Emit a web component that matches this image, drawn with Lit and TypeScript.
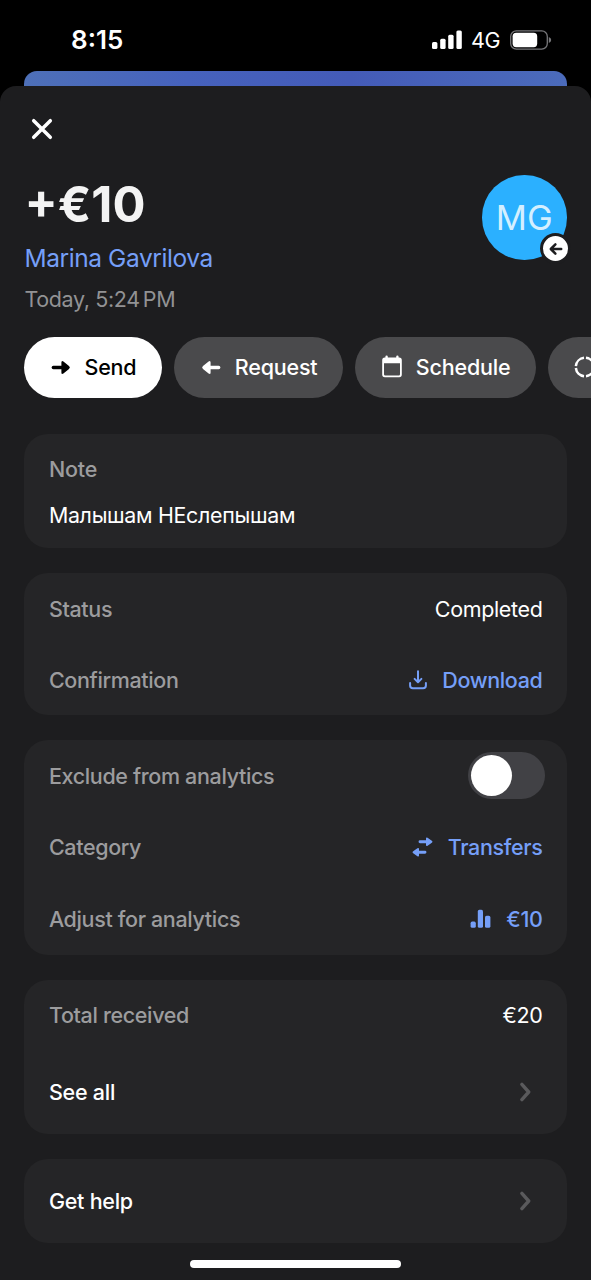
import { LitElement, html, css, svg, type TemplateResult } from "lit";
import { customElement, property } from "lit/decorators.js";

const sendArrow = svg`<path d="M2.3 9.5H11.5" stroke="currentColor" stroke-width="3.3" stroke-linecap="round"/><path d="M10.4 4.6Q10.4 2.2 12.4 3.5L18 8.1Q19.8 9.5 18 10.9L12.4 15.5Q10.4 16.8 10.4 14.4Z" fill="currentColor"/>`;

const icons: Record<string, TemplateResult> = {
  close: html`<svg width="22" height="22" viewBox="0 0 22 22"><path d="M2.7 2.7L19.3 19.3M19.3 2.7L2.7 19.3" stroke="#fff" stroke-width="3.5" stroke-linecap="round"/></svg>`,
  send: html`<svg width="20" height="19" viewBox="0 0 20 19">${sendArrow}</svg>`,
  request: html`<svg width="20" height="19" viewBox="0 0 20 19"><g transform="translate(20 0) scale(-1 1)">${sendArrow}</g></svg>`,
  calendar: html`<svg width="22" height="24" viewBox="0 0 22 24"><path fill="currentColor" fill-rule="evenodd" d="M4.4 1.7Q4.4 .5 5.6 .5T6.8 1.7V2.6H15.2V1.7Q15.2 .5 16.4 .5T17.6 1.7V2.6H18.2Q20.8 2.6 20.8 5.2V19.6Q20.8 22.2 18.2 22.2H3.8Q1.2 22.2 1.2 19.6V5.2Q1.2 2.6 3.8 2.6H4.4ZM3 8.3V19.2Q3 20.4 4.2 20.4H17.8Q19 20.4 19 19.2V8.3Z"/></svg>`,
  split: html`<svg width="22" height="22" viewBox="0 0 22 22"><circle cx="11" cy="11" r="9.2" fill="none" stroke="currentColor" stroke-width="2.5" pathLength="100" stroke-dasharray="21.5 3.5" transform="rotate(-84 11 11)"/></svg>`,
  download: html`<svg width="18" height="20" viewBox="0 0 18 20"><path d="M1.1 13V15.4Q1.1 18.2 3.9 18.2H14.1Q16.9 18.2 16.9 15.4V13M9 1.2V11.8M5.6 8.9L9 12.2L12.4 8.9" fill="none" stroke="currentColor" stroke-width="2" stroke-linecap="round" stroke-linejoin="round"/></svg>`,
  transfers: html`<svg width="21" height="20" viewBox="0 0 21 20"><path d="M8 4.7H15.5M5.5 15.3H13" stroke="currentColor" stroke-width="2.9" stroke-linecap="round"/><path d="M14 1.5Q14 -.2 15.6 .7L19.8 3.7Q21.1 4.7 19.8 5.7L15.6 8.7Q14 9.6 14 7.9ZM7 12.1Q7 10.4 5.4 11.3L1.2 14.3Q-.1 15.3 1.2 16.3L5.4 19.3Q7 20.2 7 18.5Z" fill="currentColor"/></svg>`,
  bars: html`<svg width="21" height="20" viewBox="0 0 21 20"><g fill="currentColor"><rect x=".6" y="12.6" width="5.2" height="6.2" rx="1.6"/><rect x="7.8" y=".8" width="5.2" height="18" rx="1.6"/><rect x="15" y="6.8" width="5.4" height="12" rx="1.6"/></g></svg>`,
  chevron: html`<svg width="11" height="20" viewBox="0 0 11 20"><path d="M1.9 2.4L8.7 10L1.9 17.6" fill="none" stroke="#5a5a5c" stroke-width="3.4" stroke-linecap="round" stroke-linejoin="round"/></svg>`,
  back: html`<svg width="14" height="14" viewBox="0 0 14 14"><path d="M12.2 7H2.4M6.4 2.4L1.8 7L6.4 11.6" fill="none" stroke="#1d1d1f" stroke-width="2.5" stroke-linecap="round" stroke-linejoin="round"/></svg>`,
};

@customElement("status-bar")
class StatusBar extends LitElement {
  static styles = css`
    :host { display: flex; height: 71px; box-sizing: border-box; padding: 8px 39px 0 71px; align-items: center; color: #fff; }
    .time { flex: 1; font-size: 26px; font-weight: 600; letter-spacing: 0; }
    .network { font-size: 21.5px; letter-spacing: -0.5px; margin: 1px 10px 0 9px; }
    svg { display: block; }
  `;
  render() {
    return html`
      <span class="time">8:15</span>
      <svg width="30" height="20" viewBox="0 0 30 20" fill="#fff"><rect x="0" y="12" width="5.4" height="7" rx="1.5"/><rect x="8.2" y="8.7" width="5.4" height="10.3" rx="1.5"/><rect x="16.2" y="4.8" width="5.4" height="14.2" rx="1.5"/><rect x="24.4" y="0.6" width="5.4" height="18.4" rx="1.5"/></svg>
      <span class="network">4G</span>
      <svg width="42" height="20" viewBox="0 0 42 20"><rect x=".7" y=".8" width="36.6" height="18.4" rx="5.6" fill="none" stroke="#77777a" stroke-width="1.3"/><rect x="2.6" y="2.8" width="24.6" height="14.4" rx="3.6" fill="#fff"/><path d="M38.8 7Q41.2 8 41.2 10T38.8 13Z" fill="#77777a"/></svg>
    `;
  }
}

@customElement("action-pill")
class ActionPill extends LitElement {
  @property() icon = "";
  @property() label = "";
  @property({ type: Boolean, reflect: true }) primary = false;
  static styles = css`
    :host { display: flex; flex: none; box-sizing: border-box; height: 60.5px; border-radius: 31px; padding: 0 25.5px 0 26px; align-items: center; gap: 13.5px; background: #4a4a4c; color: #fff; font-size: 21.5px; font-weight: 500; letter-spacing: -0.2px; white-space: nowrap; }
    :host([primary]) { background: #fff; color: #000; }
    .glyph { display: flex; width: 21px; justify-content: center; }
    svg { display: block; flex: none; }
  `;
  render() {
    return html`<span class="glyph">${icons[this.icon]}</span><span>${this.label}</span>`;
  }
}

@customElement("detail-row")
class DetailRow extends LitElement {
  @property() label = "";
  @property() value = "";
  @property() icon = "";
  @property({ type: Boolean, reflect: true }) link = false;
  @property({ type: Boolean, reflect: true }) nav = false;
  @property({ type: Boolean }) toggle = false;
  static styles = css`
    :host { display: flex; align-items: center; justify-content: space-between; height: 71px; padding: 0 24px 0 24.5px; color: #9c9c9e; font-size: 21.5px; font-weight: 450; letter-spacing: -0.35px; white-space: nowrap; }
    :host([nav]) { color: #fff; padding-right: 35.5px; font-weight: 500; letter-spacing: -0.25px; }
    .value { display: flex; align-items: center; gap: 15px; color: #fff; font-weight: 400; }
    :host([link]) .value { color: #759ff8; font-weight: 500; }
    .switch { display: flex; box-sizing: border-box; width: 77px; height: 47px; padding: 3px; margin-right: -2px; border-radius: 24px; background: #414145; }
    .knob { width: 41px; height: 41px; border-radius: 50%; background: #fff; }
    svg { display: block; }
  `;
  render() {
    return html`
      <span>${this.label}</span>
      ${this.toggle ? html`<span class="switch"><span class="knob"></span></span>` : ""}
      ${this.nav ? icons.chevron : ""}
      ${this.value ? html`<span class="value">${this.icon ? icons[this.icon] : ""}<span>${this.value}</span></span>` : ""}
    `;
  }
}

@customElement("app-root")
class AppRoot extends LitElement {
  static styles = css`
    :host { display: flex; flex-direction: column; height: 1280px; overflow: hidden; background: #000; font-family: Inter, sans-serif; font-weight: 400; }
    .behind { height: 15px; margin: 0 24.4px; border-radius: 13px 13px 0 0; background: linear-gradient(90deg, #4e70b8, #4662bd 30%, #445bb8 60%, #4b6bbb); }
    .sheet { flex: 1; display: flex; flex-direction: column; box-sizing: border-box; border-radius: 16px 16px 0 0; background: #1d1d1f; overflow: hidden; }
    .close { display: flex; height: 22px; padding: 32px 0 0 31px; }
    .header { display: flex; justify-content: space-between; height: 197px; box-sizing: border-box; padding: 35px 24.5px 0 24.5px; white-space: nowrap; }
    .amount { font-size: 49px; line-height: 60px; font-weight: 700; color: #f3f3f3; letter-spacing: 0; font-feature-settings: "case"; }
    .name { font-size: 24.5px; line-height: 30px; color: #759ff8; margin-top: 8px; letter-spacing: -0.42px; }
    .date { font-size: 21.5px; line-height: 28px; color: #929294; margin-top: 12px; letter-spacing: -0.38px; }
    .period { word-spacing: -2.5px; }
    .avatar { position: relative; display: flex; width: 84.5px; height: 84.5px; border-radius: 50%; align-items: center; justify-content: center; background: #2bb0ff; color: #d4efff; font-size: 34.5px; }
    .badge { position: absolute; right: -4.5px; bottom: -4.5px; display: flex; width: 25px; height: 25px; border: 3px solid #1d1d1f; border-radius: 50%; background: #fff; align-items: center; justify-content: center; }
    .pills { display: flex; gap: 12.4px; padding-left: 24px; }
    .cards { display: flex; flex-direction: column; gap: 25px; margin: 36.5px 24.5px 0 24.4px; }
    .card { border-radius: 24px; background: #252527; overflow: hidden; }
    .note { display: flex; flex-direction: column; height: 102px; padding-top: 12px; }
    .line { font-size: 21.5px; line-height: 46px; padding-left: 24.5px; color: #9c9c9e; font-weight: 450; letter-spacing: -0.2px; }
    .body { color: #fff; font-size: 21.4px; font-weight: 400; letter-spacing: -0.3px; }
    .mid { height: 72px; }
    .first { height: 70px; }
    .tall { height: 84px; }
    .home { width: 211px; height: 8px; border-radius: 4px; background: #fff; margin: 17px auto 0; }
  `;
  render() {
    return html`
      <status-bar></status-bar>
      <div class="behind"></div>
      <main class="sheet">
        <div class="close">${icons.close}</div>
        <header class="header">
          <div>
            <div class="amount">+€10</div>
            <div class="name">Marina Gavrilova</div>
            <div class="date">Today, 5:24<span class="period"> PM</span></div>
          </div>
          <div class="avatar">MG<span class="badge">${icons.back}</span></div>
        </header>
        <nav class="pills">
          <action-pill primary icon="send" label="Send"></action-pill>
          <action-pill icon="request" label="Request"></action-pill>
          <action-pill icon="calendar" label="Schedule"></action-pill>
          <action-pill icon="split"></action-pill>
        </nav>
        <div class="cards">
          <section class="card note">
            <div class="line">Note</div>
            <div class="line body">Малышам НЕслепышам</div>
          </section>
          <section class="card">
            <detail-row label="Status" value="Completed"></detail-row>
            <detail-row link label="Confirmation" icon="download" value="Download"></detail-row>
          </section>
          <section class="card">
            <detail-row toggle label="Exclude from analytics"></detail-row>
            <detail-row link class="mid" label="Category" icon="transfers" value="Transfers"></detail-row>
            <detail-row link class="mid" label="Adjust for analytics" icon="bars" value="€10"></detail-row>
          </section>
          <section class="card">
            <detail-row class="first" label="Total received" value="€20"></detail-row>
            <detail-row nav class="tall" label="See all"></detail-row>
          </section>
          <section class="card">
            <detail-row nav class="tall" label="Get help"></detail-row>
          </section>
        </div>
        <div class="home"></div>
      </main>
    `;
  }
}
